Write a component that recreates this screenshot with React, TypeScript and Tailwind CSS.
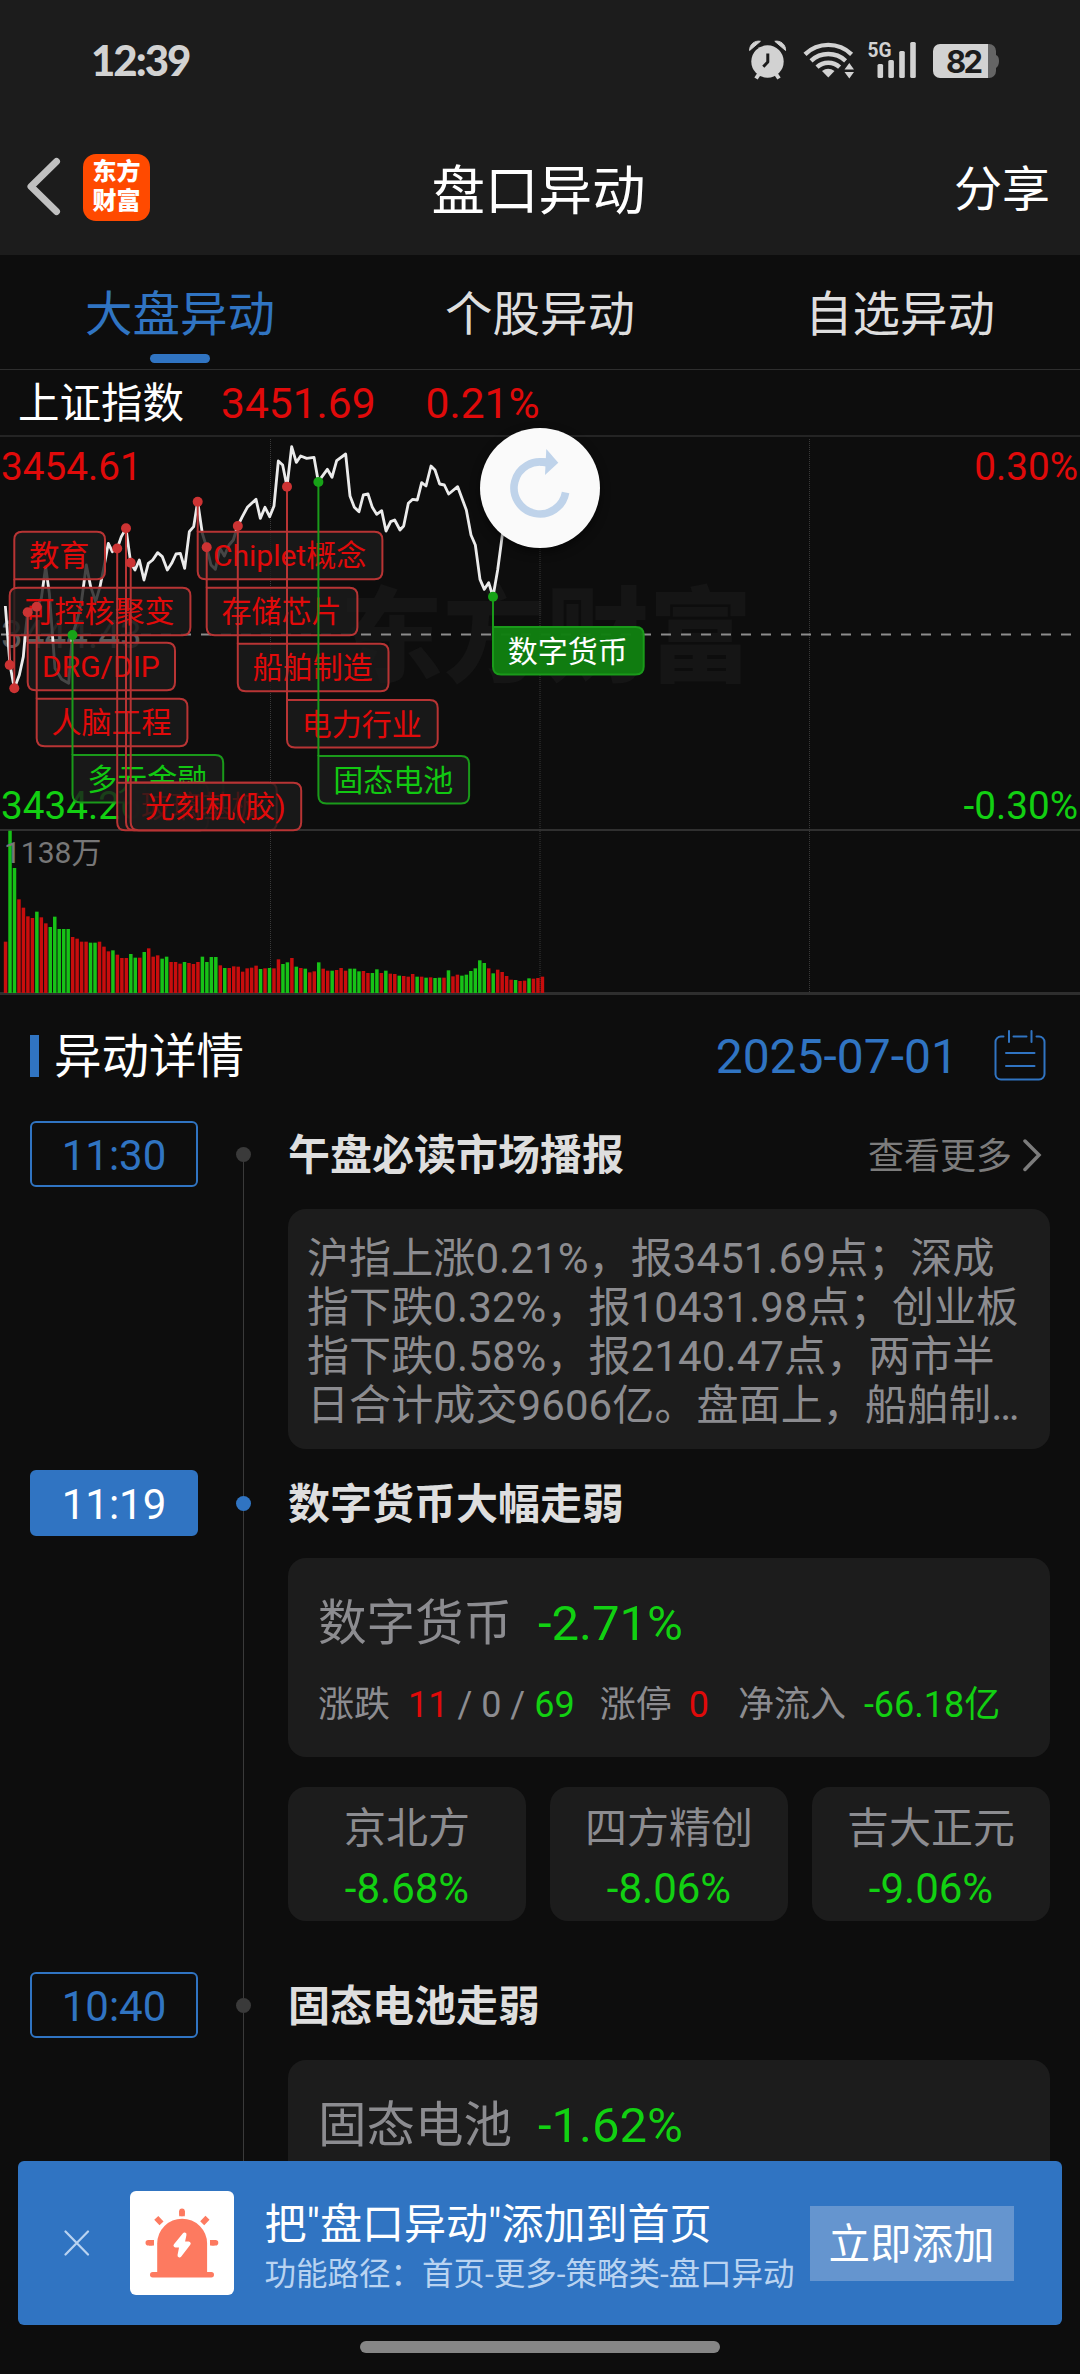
import type { ReactNode } from "react";

const UP = "#e00a0a";
const DOWN = "#12d012";

type Tag = {
  text: string;
  // dot position on the curve
  x: number;
  y: number;
  // box
  top: number;
  width: number;
  tone: "up" | "down" | "solid";
};

const tags: Tag[] = [
  { text: "教育", x: 14.3, y: 688.3, top: 531.7, width: 90.7, tone: "up" },
  { text: "可控核聚变", x: 9.7, y: 665, top: 587.7, width: 180.7, tone: "up" },
  { text: "DRG/DIP", x: 27.7, y: 612.3, top: 642.7, width: 147.3, tone: "up" },
  { text: "人脑工程", x: 36.7, y: 606.7, top: 698.7, width: 150.7, tone: "up" },
  { text: "多元金融", x: 72.5, y: 635, top: 755, width: 150.7, tone: "down" },
  { text: "Chiplet概念", x: 197.7, y: 501.7, top: 531.7, width: 184.7, tone: "up" },
  { text: "存储芯片", x: 206.7, y: 547.3, top: 587.7, width: 150.7, tone: "up" },
  { text: "船舶制造", x: 237.8, y: 526, top: 643.7, width: 150.7, tone: "up" },
  { text: "电力行业", x: 287, y: 486.7, top: 700, width: 150.7, tone: "up" },
  { text: "固态电池", x: 318.4, y: 482, top: 756, width: 150.7, tone: "down" },
  { text: "", x: 117.2, y: 548.5, top: 782.7, width: 90.7, tone: "up" },
  { text: "玻璃基板", x: 126, y: 528.3, top: 782.7, width: 150.7, tone: "up" },
  { text: "光刻机(胶)", x: 130.7, y: 562.7, top: 782.7, width: 170.5, tone: "up" },
  { text: "数字货币", x: 493, y: 596.7, top: 627, width: 150.7, tone: "solid" },
];

const toneColor = { up: "#b83434", down: "#1a9a1a", solid: "#1a9a1a" };
const toneText = { up: "#e00a0a", down: "#12c812", solid: "#ffffff" };

// price curve, three units to a pixel
const priceLine =
  "16,558 30,735 43,805 58,765 70,710 76,640 83,577 96,568 110,560 124,535 137,440 148,520 165,745 185,778 206,790 217,645 232,600 245,540 259,435 272,500 287,545 300,500 312,440 325,370 337,395 352,385 364,350 378,325 392,428 405,450 418,420 432,480 445,430 458,420 473,398 487,410 502,450 515,430 528,402 541,400 554,445 568,335 581,320 593,245 607,340 620,382 633,435 646,448 660,385 673,408 687,375 700,360 713,318 727,290 742,262 768,238 781,295 795,262 809,290 822,258 835,123 848,135 861,200 875,80 889,127 902,108 920,115 942,112 955,185 982,148 996,172 1010,122 1037,102 1050,228 1063,262 1077,275 1090,225 1104,222 1117,262 1130,283 1145,272 1158,333 1172,305 1184,300 1200,330 1211,318 1225,250 1238,238 1252,240 1265,188 1278,198 1293,138 1305,150 1319,192 1333,195 1346,222 1373,200 1399,270 1413,345 1426,375 1440,478 1453,508 1466,488 1479,530 1493,450 1507,345 1530,200";

// volume per minute, negative = falling
const volumes = [
  154, -487, -375, 281, 256, 230, 225, -244, 227, 209, -198, -229, -192, -192,
  -192, 168, 163, 154, 154, -151, -151, 154, 139, 125, -128, 115, 105, 105,
  -117, -106, 106, -123, 134, 109, 113, -103, -109, 93, 93, 88, -93, 90, 87, 93,
  -109, -93, -108, -108, 83, -75, 75, 80, 79, 64, 74, 76, 82, -72, 74, -75, 74,
  101, -87, -92, 105, -79, 75, -73, 62, 65, -92, 73, 67, -67, 69, 75, 67, -73,
  -73, -65, 66, 60, -60, -71, 60, -67, 58, 57, -52, 51, 49, 57, -49, 49, -46,
  47, -45, -46, 46, -68, 50, 55, -52, -55, -66, -74, -98, -90, 74, -59, 70, 63,
  51, 40, -39, 36, 37, -44, 43, 45, 49,
];

function tagPath(t: Tag) {
  const r = 8;
  const l = t.x;
  const right = t.x + t.width;
  const b = t.top + 47.5;
  // the corner where the stem meets the box stays square
  const fromBelow = t.y > b;
  const tl = fromBelow ? r : 0;
  const bl = fromBelow ? 0 : r;
  return `M${l + tl} ${t.top}H${right - r}Q${right} ${t.top} ${right} ${t.top + r}V${b - r}Q${right} ${b} ${right - r} ${b}H${l + bl}Q${l} ${b} ${l} ${b - bl}V${t.top + tl}Q${l} ${t.top} ${l + tl} ${t.top}Z`;
}

function StatusBar() {
  return (
    <div className="flex h-[120px] items-center justify-between pr-[80px] pl-[91px] text-[#d2d2d2]">
      <span className="font-[Lato] text-[42px] leading-none font-black tracking-[-2px]">
        12:39
      </span>
      <svg width="252" height="44" viewBox="748 38 252 44" fill="#d2d2d2">
        {/* alarm */}
        <circle cx="767.5" cy="61.5" r="16.2" />
        <path d="M749.6 50.5a9 9 0 0 1 10.8-9.2zM785.6 50.5a9 9 0 0 0-10.8-9.2z" stroke="#d2d2d2" strokeLinejoin="round" />
        <path d="M759 74l-3 4.5M776 74l3 4.5" stroke="#d2d2d2" strokeWidth="4" />
        <path d="M767.8 53.5V62l-4.5 4.7" stroke="#1c1c1c" strokeWidth="3" fill="none" strokeLinejoin="round" />
        {/* wifi */}
        <g fill="none" stroke="#d2d2d2" strokeWidth="4.4">
          <path d="M805 54.3a33.5 33.5 0 0 1 46.6 0" />
          <path d="M811 60.8a25.5 25.5 0 0 1 34.6 0" />
          <path d="M817 67.2a16.5 16.5 0 0 1 22.6 0" />
        </g>
        <path d="M822 71q6-4.5 12.500 0L828.300 77.500z" />
        <path d="M844.500 69.500h9.500l-4.700-6.500zM844.500 72h9.500l-4.700 6.500z" />
        {/* signal */}
        <text x="867.500" y="57" fontSize="21" fontWeight="700" fontFamily="Roboto" textLength="24" lengthAdjust="spacingAndGlyphs">
          5G
        </text>
        <rect x="877.5" y="64" width="5.6" height="14" rx="1.5" />
        <rect x="888.3" y="60" width="5.6" height="18" rx="1.5" />
        <rect x="899.2" y="51" width="5.6" height="27" rx="1.5" />
        <rect x="910.2" y="42" width="5.6" height="36" rx="1.5" />
        {/* battery */}
        <path d="M986 44h3a7 7 0 0 1 7 7v4q3 1 3 6t-3 7v3a7 7 0 0 1-7 7h-3z" fill="#656565" />
        <path d="M940 44h48v34h-48a7 7 0 0 1-7-7V51a7 7 0 0 1 7-7z" />
        <text x="964.5" y="72.6" fontSize="31" fontWeight="700" fontFamily="Inter" fill="#1c1c1c" textAnchor="middle" textLength="37">
          82
        </text>
      </svg>
    </div>
  );
}

function NavBar() {
  return (
    <div className="mt-[5px] grid h-[130px] grid-cols-3 items-center pr-[30px] pl-[27px]">
      <div className="-mt-[6px] flex items-center gap-[22px]">
        <svg width="34" height="60" viewBox="0 0 34 60" fill="none" stroke="#c0c0c0" strokeWidth="7" strokeLinecap="round" strokeLinejoin="round">
          <path d="M29.5 4.5L4 29.5L29.5 54.5" />
        </svg>
        <div className="flex h-[67px] w-[67px] flex-col items-center justify-center rounded-[13px] bg-[#ff4a00] text-[24px] leading-[29px] font-black text-white">
          <span>东方</span>
          <span>财富</span>
        </div>
      </div>
      <h1 className="pt-1 text-center text-[53.5px] leading-none text-white">盘口异动</h1>
      <span className="text-right text-[48px] leading-none text-white">分享</span>
    </div>
  );
}

function Tabs() {
  return (
    <div className="grid h-[115px] grid-cols-3 border-b border-[#2e2e2e] text-center text-[47.5px] leading-[48px] text-[#dedede]">
      <div className="flex flex-col items-center pt-9 text-[#3074c2]">
        大盘异动
        <span className="mt-[15px] h-[9px] w-[60px] rounded-full bg-[#3074c2]" />
      </div>
      <div className="pt-9">个股异动</div>
      <div className="pt-9">自选异动</div>
    </div>
  );
}

function Chart() {
  return (
    <svg width="1080" height="561" viewBox="0 435 1080 561" className="block" fontFamily="Roboto, 'Noto Sans CJK SC', sans-serif">
      <text x="340" y="674" fontSize="103" fontWeight="900" fill="#151515">
        东方财富
      </text>
      <path d="M0 436H1080" stroke="#242424" strokeWidth="2" />
      <path d="M0 830H1080" stroke="#303030" strokeWidth="2" />
      <path d="M0 993.5H1080" stroke="#2e2e2e" strokeWidth="3" />
      <path d="M270.5 439V992M540 439V992M809.5 439V992" stroke="#3a3a3a" strokeWidth="1" strokeDasharray="1 1" />
      <path d="M1 634.5H1080" stroke="#8c8c8c" strokeWidth="2" strokeDasharray="10 10" />

      <g fontSize="38.7">
        <text x="1" y="480" fill={UP}>3454.61</text>
        <text x="1" y="648" fill="#5a5a5a">3444.43</text>
        <text x="1" y="819" fill={DOWN}>3434.26</text>
        <text x="1078" y="480" fill={UP} textAnchor="end">0.30%</text>
        <text x="1078" y="819" fill={DOWN} textAnchor="end">-0.30%</text>
      </g>

      {volumes.map((v, i) => (
        <rect
          key={i}
          x={3.8 + i * 4.474}
          y={993 - Math.abs(v) / 3}
          width="3.5"
          height={Math.abs(v) / 3}
          fill={v > 0 ? "#c80d0d" : "#17c217"}
        />
      ))}
      <text x="4" y="863" fontSize="30" fill="#777777">1138万</text>

      <polyline
        points={priceLine}
        transform="translate(0 420) scale(0.33333)"
        fill="none"
        stroke="#ebebeb"
        strokeWidth="8.5"
        strokeLinejoin="round"
      />

      {tags.map((t) => (
        <g key={t.x}>
          <path
            d={`M${t.x} ${t.y}V${t.y > t.top ? t.top + 47.5 : t.top}`}
            stroke={toneColor[t.tone]}
            strokeWidth="2"
          />
          <path
            d={tagPath(t)}
            fill={t.tone === "solid" ? "#118011" : "#1c1c1c"}
            fillOpacity={t.tone === "solid" ? 0.97 : 0.8}
            stroke={toneColor[t.tone]}
            strokeWidth="2"
          />
          {t.text && (
            <text x={t.x + t.width / 2 - 0.5} y={t.top + 34.5} fontSize="30" textAnchor="middle" fill={toneText[t.tone]}>
              {t.text}
            </text>
          )}
        </g>
      ))}
      {tags.map((t) => (
        <circle key={t.x} cx={t.x} cy={t.y} r="5" fill={t.tone === "up" ? "#cc3333" : "#17a317"} />
      ))}
    </svg>
  );
}

function RefreshButton() {
  return (
    <div className="absolute top-[428px] left-[480px] h-[120px] w-[120px] rounded-full bg-[#fafafa] shadow-[0_4px_10px_rgba(0,0,0,0.5)]">
      <svg width="120" height="120" viewBox="0 0 120 120">
        <path d="M67 34.900A26 26 0 1 0 85.600 64.500" fill="none" stroke="#bfd3ea" strokeWidth="7.6" />
        <path d="M60 34H68" stroke="#bfd3ea" strokeWidth="7.6" />
        <path d="M66.300 21L78.300 34.700L65 47z" fill="#bfd3ea" />
      </svg>
    </div>
  );
}

function SectionHeader() {
  return (
    <div className="flex h-[120px] items-center pr-[34px] pl-[30px]">
      <span className="h-[42px] w-[9px] bg-[#3074c2]" />
      <h2 className="ml-[15px] pt-[3px] text-[47.5px] leading-none text-white">异动详情</h2>
      <span className="ml-auto pt-[2px] text-[48px] leading-none text-[#3074c2]">2025-07-01</span>
      <svg className="-mt-[2px] ml-[36px]" width="52" height="52" viewBox="0 0 52 52" fill="none" stroke="#3074c2" strokeWidth="2" strokeLinecap="round">
        <path d="M9.500 7.500H7a5.500 5.500 0 0 0-5.500 5.500v32.500A5.500 5.500 0 0 0 7 50.500h38a5.500 5.500 0 0 0 5.500-5.500V13A5.500 5.500 0 0 0 45 7.500h-2.500" />
        <path d="M19.500 7.500h13M15 2v11M37.500 2v11M12 24h28.500M12 37h28.500" />
      </svg>
    </div>
  );
}

type EventProps = {
  time: string;
  title: string;
  active?: boolean;
  first?: boolean;
  more?: boolean;
  children: ReactNode;
};

function TimelineEvent({ time, title, active, first, more, children }: EventProps) {
  return (
    <div className="flex pr-[30px] pl-[30px]">
      <div
        className={`flex h-[66px] w-[168px] items-center justify-center rounded-md border-2 border-[#3074c2] pt-[3px] text-[42px] leading-none ${active ? "bg-[#3074c2] text-white" : "text-[#3074c2]"}`}
      >
        {time}
      </div>
      <div className="flex w-[90px] flex-col items-center">
        <span className={`h-[26px] w-px ${first ? "bg-transparent" : "bg-[#3a3a3a]"}`} />
        <span className={`h-[15px] w-[15px] rounded-full ${active ? "bg-[#3074c2]" : "bg-[#3a3a3a]"}`} />
        <span className="w-px grow bg-[#3a3a3a]" />
      </div>
      <div className="w-[762px]">
        <div className="flex h-[66px] items-center justify-between pt-[3px] pr-2">
          <h3 className="text-[42px] leading-none font-bold text-[#dedede]">{title}</h3>
          {more && (
            <div className="flex items-center gap-[10px] text-[36px] leading-none text-[#7c7c7c]">
              <span className="pt-[3px]">查看更多</span>
              <svg width="20" height="34" viewBox="0 0 20 34" fill="none" stroke="#7c7c7c" strokeWidth="3.500" strokeLinecap="round">
                <path d="M3 2L17 16L3 30.500" />
              </svg>
            </div>
          )}
        </div>
        <div className="mt-[22px]">{children}</div>
      </div>
    </div>
  );
}

function SectorCard({ name, change, children }: { name: string; change: string; children?: ReactNode }) {
  return (
    <div className="h-[199px] rounded-[18px] bg-[#1c1c1c] pt-[41px] pl-[30px]">
      <div className="flex items-center gap-[26px] text-[49px] leading-[50px]">
        <span className="text-[48.5px] text-[#8c8c90]">{name}</span>
        <span className="text-[#12d012]">{change}</span>
      </div>
      {children}
    </div>
  );
}

const stocks = [
  { name: "京北方", change: "-8.68%" },
  { name: "四方精创", change: "-8.06%" },
  { name: "吉大正元", change: "-9.06%" },
];

function Timeline() {
  return (
    <div className="mt-[5px]">
      <TimelineEvent time="11:30" title="午盘必读市场播报" first more>
        <div className="mb-[21px] h-[240px] rounded-[18px] bg-[#1c1c1c] pt-[25px] pl-[19px] text-[42px] leading-[49px] tracking-[0.1px] whitespace-nowrap text-[#8c8c90]">
          <p>沪指上涨0.21%，报3451.69点；深成</p>
          <p>指下跌0.32%，报10431.98点；创业板</p>
          <p>指下跌0.58%，报2140.47点，两市半</p>
          <p>日合计成交9606亿。盘面上，船舶制…</p>
        </div>
      </TimelineEvent>
      <TimelineEvent time="11:19" title="数字货币大幅走弱" active>
        <SectorCard name="数字货币" change="-2.71%">
          <div className="mt-[38px] flex items-center text-[36px] leading-none whitespace-nowrap text-[#8c8c90]">
            <span>涨跌</span>
            <span className="ml-[18px]">
              <span className="text-[#e00a0a]">11</span> / 0 / <span className="text-[#12d012]">69</span>
            </span>
            <span className="ml-[25px]">涨停</span>
            <span className="ml-[17px] text-[#e00a0a]">0</span>
            <span className="ml-[29px]">净流入</span>
            <span className="ml-[18px] text-[#12d012]">-66.18亿</span>
          </div>
        </SectorCard>
        <div className="mt-[30px] mb-[51px] grid grid-cols-3 gap-6">
          {stocks.map((s) => (
            <div key={s.name} className="flex h-[134px] flex-col items-center rounded-[18px] bg-[#1c1c1c] pt-[21px] text-[42px] leading-none">
              <span className="text-[#8c8c90]">{s.name}</span>
              <span className="mt-[18px] text-[#12d012]">{s.change}</span>
            </div>
          ))}
        </div>
      </TimelineEvent>
      <TimelineEvent time="10:40" title="固态电池走弱">
        <SectorCard name="固态电池" change="-1.62%" />
      </TimelineEvent>
    </div>
  );
}

function AddBanner() {
  return (
    <div className="absolute bottom-[49px] left-[18px] flex h-[164px] w-[1044px] items-center rounded-md bg-[#3074c2]">
      <svg className="ml-[46px]" width="26" height="26" viewBox="0 0 26 26" stroke="#b9d3f1" strokeWidth="2.200" strokeLinecap="round">
        <path d="M1.500 1.500L24 24.500M24 1.500L1.500 24.500" />
      </svg>
      <div className="ml-[39.5px] h-[104px] w-[104px] rounded-md bg-white">
        <svg width="104" height="104" viewBox="0 0 104 104" fill="#fd7a60">
          <path d="M27.200 82V52.600a24.950 24.950 0 0 1 49.900 0V82z" />
          <rect x="20" y="81" width="64" height="5.4" rx="2.7" />
          <g stroke="#fd7a60" strokeWidth="5.6" strokeLinecap="round">
            <path d="M52 20.200V22.500M18.300 51.700H21M83 51.700H85.500" />
          </g>
          <g stroke="#fd7a60" strokeWidth="5.6">
            <path d="M52 20V25.300M19 51.700H24M80 51.700H84.500M26.300 26.800L31.500 32.300M77.500 26.800L72.200 32.300" />
          </g>
          <path d="M54.500 43.500L45.500 54.500H51.500L49.500 64.500L58.700 52.500H52.600z" fill="#fff" stroke="#fff" strokeWidth="4" strokeLinejoin="round" />
        </svg>
      </div>
      <div className="ml-[31px] w-[545px] pt-[13px] whitespace-nowrap">
        <p className="text-[42px] leading-[50px] text-white">把"盘口异动"添加到首页</p>
        <p className="text-[31.5px] leading-[50px] text-[#b9d3f1]">功能路径：首页-更多-策略类-盘口异动</p>
      </div>
      <button className="flex h-[75px] w-[204px] items-center justify-center bg-[#6595cf] pt-1 text-[41.5px] leading-none text-white">
        立即添加
      </button>
    </div>
  );
}

export default function App() {
  return (
    <div className="relative h-[2374px] w-[1080px] overflow-hidden bg-[#0d0d0d] font-[Roboto,'Noto_Sans_CJK_SC',sans-serif]">
      <header className="h-[255px] bg-[#1c1c1c]">
        <StatusBar />
        <NavBar />
      </header>
      <Tabs />
      <div className="flex h-[65px] items-center pt-[3px] pl-[18px] text-[42.5px] leading-none text-[#e00a0a]">
        <span className="text-[41.5px] text-white">上证指数</span>
        <span className="ml-[37px]">3451.69</span>
        <span className="ml-[50px]">0.21%</span>
      </div>
      <Chart />
      <SectionHeader />
      <Timeline />
      <RefreshButton />
      <AddBanner />
      <div className="absolute bottom-[21px] left-[360px] h-3 w-[360px] rounded-full bg-[#868686]" />
    </div>
  );
}
